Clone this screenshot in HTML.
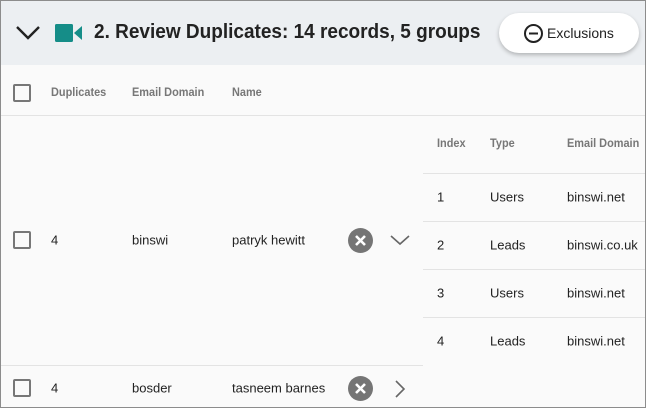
<!DOCTYPE html>
<html><head><style>
*{margin:0;padding:0;box-sizing:border-box}
body{width:646px;height:408px;overflow:hidden;background:#fafafa;font-family:"Liberation Sans",sans-serif;position:relative}
.frame{position:absolute;left:0;top:0;width:646px;height:408px;border:1px solid #8c8c8c;pointer-events:none;z-index:9}
.hdr{position:absolute;left:0;top:0;width:646px;height:65px;background:#eceff2}
.t{position:absolute;white-space:nowrap}
.h{font-size:11.5px;color:#777;font-weight:bold;transform:translateY(-50%) scaleX(.95);transform-origin:left center}
.c{font-size:13px;color:#222;transform:translateY(-50%)}
.cb{position:absolute;width:18px;height:18px;border:2px solid #777;border-radius:2px;background:#fafafa}
.ln{position:absolute;height:1px;background:#e3e3e3}
.x{position:absolute;width:25px;height:25px;border-radius:50%;background:#757575}
</style></head><body>
<div class="hdr"></div>
<svg style="position:absolute;left:15px;top:24px" width="26" height="16"><path d="M2 3 L13 14 L24 3" fill="none" stroke="#222" stroke-width="2.4"/></svg>
<svg style="position:absolute;left:54px;top:23px" width="30" height="20"><rect x="1" y="1" width="18" height="18" rx="1.5" fill="#158d88"/><path d="M20 10 L28 3 V17 Z" fill="#158d88"/></svg>
<div class="t" style="left:94px;top:21px;font-size:20px;font-weight:bold;color:#222;transform:scaleX(.95);transform-origin:left">2. Review Duplicates: 14 records, 5 groups</div>
<div style="position:absolute;left:499px;top:13px;width:140px;height:40px;border-radius:20px;background:#fff;box-shadow:0 2px 4px rgba(0,0,0,.25)"></div>
<svg style="position:absolute;left:523px;top:23px" width="21" height="21"><circle cx="10.5" cy="10.5" r="8.5" fill="none" stroke="#222" stroke-width="2"/><path d="M6 10.5 H15" stroke="#222" stroke-width="2"/></svg>
<div class="t" style="left:547px;top:25px;font-size:14px;color:#222">Exclusions</div>

<div class="cb" style="left:13px;top:84px"></div>
<div class="t h" style="left:51px;top:93px">Duplicates</div>
<div class="t h" style="left:132px;top:93px">Email Domain</div>
<div class="t h" style="left:232px;top:93px">Name</div>
<div class="ln" style="left:0;top:115px;width:646px"></div>

<div class="cb" style="left:13px;top:231px"></div>
<div class="t c" style="left:51px;top:240px">4</div>
<div class="t c" style="left:132px;top:240px">binswi</div>
<div class="t c" style="left:232px;top:240px">patryk hewitt</div>
<div class="x" style="left:348px;top:228px"></div>
<svg style="position:absolute;left:348px;top:228px" width="25" height="25"><path d="M8 8 L17 17 M17 8 L8 17" stroke="#fff" stroke-width="2.6"/></svg>
<svg style="position:absolute;left:389px;top:233px" width="22" height="14"><path d="M2 3 L11 11 L20 3" fill="none" stroke="#666" stroke-width="1.6"/></svg>

<div class="t h" style="left:437px;top:144px">Index</div>
<div class="t h" style="left:490px;top:144px">Type</div>
<div class="t h" style="left:567px;top:144px">Email Domain</div>
<div class="ln" style="left:423px;top:173px;width:223px"></div>
<div class="t c" style="left:437px;top:197px">1</div><div class="t c" style="left:490px;top:197px">Users</div><div class="t c" style="left:567px;top:197px">binswi.net</div>
<div class="ln" style="left:423px;top:221px;width:223px"></div>
<div class="t c" style="left:437px;top:245px">2</div><div class="t c" style="left:490px;top:245px">Leads</div><div class="t c" style="left:567px;top:245px">binswi.co.uk</div>
<div class="ln" style="left:423px;top:269px;width:223px"></div>
<div class="t c" style="left:437px;top:293px">3</div><div class="t c" style="left:490px;top:293px">Users</div><div class="t c" style="left:567px;top:293px">binswi.net</div>
<div class="ln" style="left:423px;top:317px;width:223px"></div>
<div class="t c" style="left:437px;top:341px">4</div><div class="t c" style="left:490px;top:341px">Leads</div><div class="t c" style="left:567px;top:341px">binswi.net</div>

<div class="ln" style="left:0;top:365px;width:423px"></div>
<div class="cb" style="left:13px;top:379px"></div>
<div class="t c" style="left:51px;top:388px">4</div>
<div class="t c" style="left:132px;top:388px">bosder</div>
<div class="t c" style="left:232px;top:388px">tasneem barnes</div>
<div class="x" style="left:348px;top:376px"></div>
<svg style="position:absolute;left:348px;top:376px" width="25" height="25"><path d="M8 8 L17 17 M17 8 L8 17" stroke="#fff" stroke-width="2.6"/></svg>
<svg style="position:absolute;left:393px;top:379px" width="14" height="20"><path d="M3 2 L11 10 L3 18" fill="none" stroke="#666" stroke-width="1.6"/></svg>
<div class="frame"></div>
</body></html>
